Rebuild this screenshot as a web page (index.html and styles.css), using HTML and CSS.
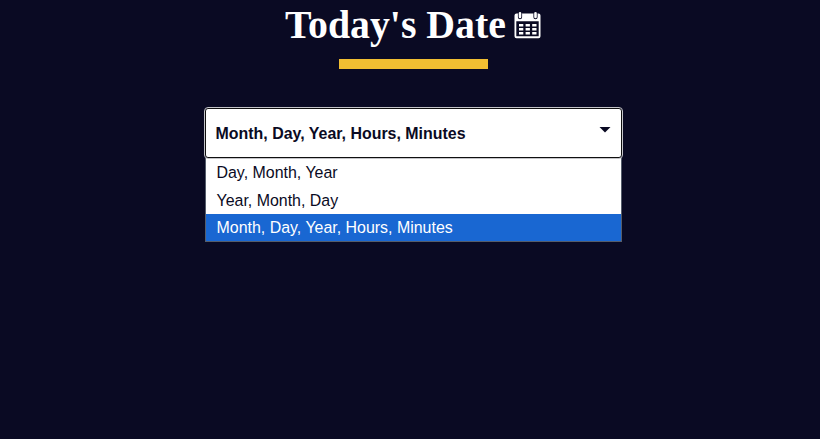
FILE: index.html
```html
<!DOCTYPE html>
<html lang="en">
<head>
<meta charset="utf-8">
<title>Today's Date</title>
<link rel="stylesheet" href="styles.css">
</head>
<body>
<main class="page">
  <h1 class="title"><span>Today's Date</span>
    <svg class="calendar" viewBox="0 0 28 28" aria-hidden="true">
      <path d="M2.500 2.500h22a2 2 0 0 1 2 2v20.800a2 2 0 0 1-2 2h-22a2 2 0 0 1-2-2V4.500a2 2 0 0 1 2-2zM2.300 10.300v15h22.400v-15z" fill="#fff" fill-rule="evenodd"/>
      <path d="M6 2.800v3.400M21.500 2.800v3.400" stroke="#0a0a23" stroke-width="4.200" stroke-linecap="round"/>
      <path d="M6 2.200v3.800M21.500 2.200v3.800" stroke="#fff" stroke-width="2.600" stroke-linecap="round"/>
      <path d="M5 14.300h17.500M5 18.300h17.500M5 22.300h17.500" stroke="#fff" stroke-width="2.500" stroke-dasharray="4.300 2.300"/>
    </svg>
  </h1>
  <div class="divider"></div>
  <div class="dropdown">
    <button class="select"><span>Month, Day, Year, Hours, Minutes</span>
      <svg class="arrow" viewBox="0 0 12 6" aria-hidden="true"><path d="M0.500 0h11L6 5.500z"/></svg>
    </button>
    <ul class="options">
      <li class="option">Day, Month, Year</li>
      <li class="option">Year, Month, Day</li>
      <li class="option selected">Month, Day, Year, Hours, Minutes</li>
    </ul>
  </div>
</main>
</body>
</html>
```
FILE: styles.css
```css
* { box-sizing: border-box; }
body { margin: 0; background: #0a0a23; color: #fff; }
.page { display: flex; flex-direction: column; align-items: center; padding-left: 7px; }
.title { display: flex; gap: 8px; margin: 2px 0 0; height: 47px; font: bold 39.8px/46px "Liberation Serif", serif; }
.calendar { width: 28px; height: 28px; margin-top: 9px; }
.divider { width: 149px; height: 10px; margin-top: 10px; background: #f1be32; }
.dropdown { width: 417px; margin-top: 39px; font-family: "Liberation Sans", sans-serif; color: #0a0a23; }
.select { display: flex; justify-content: space-between; align-items: center; width: 100%; height: 50px; padding: 1px 10px 0 9.5px; border: 1px solid #101010; border-radius: 3px; outline: 1px solid #c4c4c8; background: #fff; font: bold 15.95px "Liberation Sans", sans-serif; color: #0a0a23; }
.arrow { width: 12px; height: 6px; margin-bottom: 8px; fill: #0a0a23; }
.options { list-style: none; margin: 0; padding: 1px 0 0; border: 1px solid #555d6b; border-top: 0; background: #fff; }
.option { height: 27.500px; padding-left: 10.500px; font-size: 15.950px; line-height: 27.500px; }
.selected { height: 27px; background: #1967d2; color: #fff; }
```
